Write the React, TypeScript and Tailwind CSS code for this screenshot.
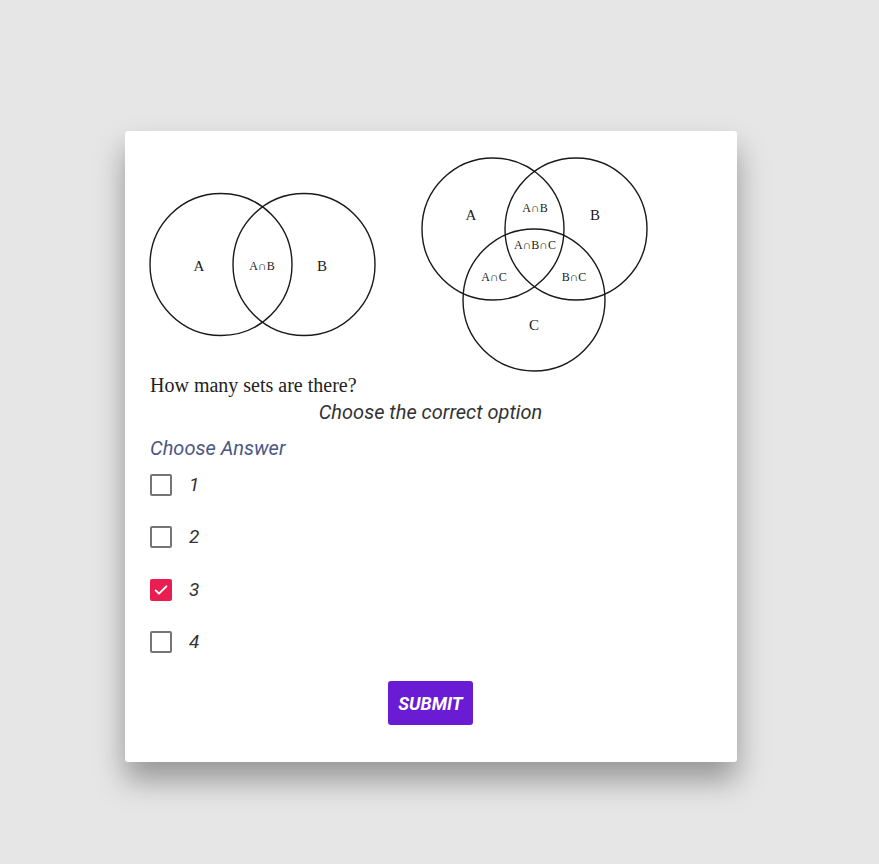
import { useState } from "react";

const serif = { fontFamily: '"Liberation Serif", "Times New Roman", serif' };

// Two-set Venn diagram
function VennTwo() {
  return (
    <svg width="230" height="150" viewBox="0 0 230 150" style={serif}>
      <g fill="none" stroke="#1a1a1a" strokeWidth="1.4">
        <circle cx="73" cy="74.5" r="71" />
        <circle cx="156" cy="74.5" r="71" />
      </g>
      <g fill="#1a1a1a" textAnchor="middle">
        <text x="51" y="81" fontSize="15">A</text>
        <text x="114" y="80" fontSize="12">A∩B</text>
        <text x="174" y="81" fontSize="15">B</text>
      </g>
    </svg>
  );
}

// Three-set Venn diagram
function VennThree() {
  return (
    <svg width="230" height="222" viewBox="0 0 230 222" style={serif}>
      <g fill="none" stroke="#1a1a1a" strokeWidth="1.4">
        <circle cx="73" cy="75" r="71" />
        <circle cx="156" cy="75" r="71" />
        <circle cx="114" cy="146" r="71" />
      </g>
      <g fill="#1a1a1a" textAnchor="middle">
        <text x="51" y="66" fontSize="15">A</text>
        <text x="175" y="66" fontSize="15">B</text>
        <text x="115" y="58" fontSize="12">A∩B</text>
        <text x="115" y="95" fontSize="12">A∩B∩C</text>
        <text x="74" y="127" fontSize="12">A∩C</text>
        <text x="154" y="127" fontSize="12">B∩C</text>
        <text x="114" y="176" fontSize="15">C</text>
      </g>
    </svg>
  );
}

const options = ["1", "2", "3", "4"];

export default function App() {
  const [selected, setSelected] = useState<string | null>("3");

  return (
    <div className="min-h-[864px] w-full bg-[#e6e6e6] pt-[131px] pl-[125px]">
      {/* Question card */}
      <div
        className="w-[612px] h-[631px] bg-white rounded-[3px] shadow-[0_18px_30px_rgba(0,0,0,0.35)] pt-[23px] pl-[23px] pr-6"
        style={{ fontFamily: 'Roboto, "Liberation Sans", sans-serif' }}
      >
        <div className="flex items-center gap-[42px]">
          <VennTwo />
          <VennThree />
        </div>

        <p className="-mt-[2px] pl-[2px] text-[20px] leading-[22px] text-[#222]" style={serif}>
          How many sets are there?
        </p>
        <p className="mt-[4px] text-center text-[20px] leading-[24px] italic text-[#333]">
          Choose the correct option
        </p>

        <p className="mt-[12px] pl-[2px] text-[20px] leading-[24px] italic text-[#4b5685]">
          Choose Answer
        </p>

        {/* Options */}
        <div className="mt-[14px] pl-[2px] flex flex-col gap-[30.4px]">
          {options.map((opt) => {
            const checked = selected === opt;
            return (
              <label
                key={opt}
                className="flex items-center gap-[17px] h-[22px] cursor-pointer"
                onClick={() => setSelected(checked ? null : opt)}
              >
                {checked ? (
                  <span className="w-[22px] h-[22px] rounded-[2px] bg-[#e91e50] flex items-center justify-center">
                    <svg width="16" height="16" viewBox="0 0 24 24" fill="none" stroke="white" strokeWidth="3" strokeLinecap="round" strokeLinejoin="round">
                      <path d="M4 12.5l5 5L20 6.5" />
                    </svg>
                  </span>
                ) : (
                  <span className="w-[22px] h-[22px] rounded-[2px] border-2 border-[#757575]" />
                )}
                <span className="text-[19px] italic text-[#333]">{opt}</span>
              </label>
            );
          })}
        </div>

        <div className="mt-[28px] flex justify-center">
          <button className="w-[85px] h-[44px] rounded-[3px] bg-[#6a1bd4] text-white text-[18px] font-bold italic">
            SUBMIT
          </button>
        </div>
      </div>
    </div>
  );
}
